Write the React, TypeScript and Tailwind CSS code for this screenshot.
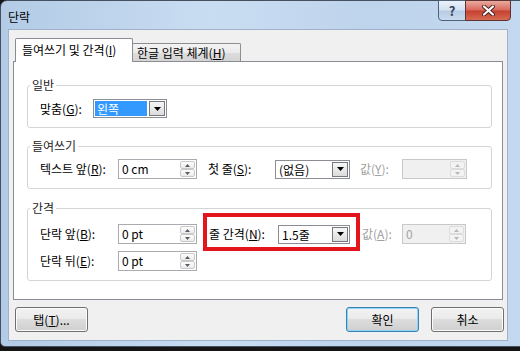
import React from "react";

const font = "font-['Noto_Sans_CJK_KR','Noto_Sans',sans-serif]";

const K = ({ k }: { k: string }) => <u className="underline-offset-[1px]">{k}</u>;

const Arrow = ({ up, dim }: { up?: boolean; dim?: boolean }) => (
  <svg width="5" height="3" viewBox="0 0 5 3">
    <path d={up ? "M2.5 0L5 3H0z" : "M0 0h5L2.5 3z"} fill={dim ? "#b8b8b8" : "#555c66"} />
  </svg>
);

const Spin = ({ value, w, disabled }: { value: string; w: string; disabled?: boolean }) => (
  <div
    className={`flex h-[20px] ${w} border ${
      disabled ? "border-[#c8c8c8] bg-[#f0f0f0] text-[#a3a3a3]" : "border-[#a9abb0] bg-white text-black"
    }`}
  >
    <div className="flex-1 pl-[3px] leading-[18px]">{value}</div>
    <div className="flex w-[17px] flex-col p-px">
      <div
        className={`flex h-[9px] items-center justify-center rounded-[2px] border ${
          disabled ? "border-[#dcdcdc] bg-[#f3f3f3]" : "border-[#c9c9c9] bg-[linear-gradient(#fdfdfd,#ebebeb)]"
        }`}
      >
        <Arrow up dim={disabled} />
      </div>
      <div
        className={`flex h-[9px] items-center justify-center rounded-[2px] border ${
          disabled ? "border-[#dcdcdc] bg-[#f3f3f3]" : "border-[#c9c9c9] bg-[linear-gradient(#fdfdfd,#ebebeb)]"
        }`}
      >
        <Arrow dim={disabled} />
      </div>
    </div>
  </div>
);

const Combo = ({ value, w, selected }: { value: string; w: string; selected?: boolean }) => (
  <div className={`flex h-[19px] ${w} border border-[#8a8d93] bg-white p-px`}>
    <div className={`flex-1 pl-[2px] leading-[15px] ${selected ? "bg-[#3399ff] text-white" : "text-black"}`}>
      {value}
    </div>
    <div className="ml-[2px] flex w-[16px] items-center justify-center border border-[#75787e] bg-[linear-gradient(#f6f6f6,#dcdcdc)]">
      <svg width="7" height="4" viewBox="0 0 7 4">
        <path d="M0 0h7L3.5 4z" fill="#000" />
      </svg>
    </div>
  </div>
);

const Group = ({ title, children, className }: { title: string; children: React.ReactNode; className: string }) => (
  <fieldset className={`ml-[13px] w-[465px] rounded-[3px] border border-[#d5d5d5] ${className}`}>
    <legend className="ml-[2px] px-[2px] leading-[14px] text-[#1e1e1e]">{title}</legend>
    {children}
  </fieldset>
);

const Button = ({ children, isDefault }: { children: React.ReactNode; isDefault?: boolean }) => (
  <button
    className={`h-[25px] w-[73px] rounded-[3px] border bg-[linear-gradient(#f2f2f2_0%,#ebebeb_45%,#dddddd_50%,#cfcfcf_100%)] leading-[23px] text-black ${
      isDefault
        ? "border-[#3c7fb1] shadow-[inset_0_0_0_1px_#8ad6f6]"
        : "border-[#707070] shadow-[inset_0_0_0_1px_#fbfbfb]"
    }`}
  >
    {children}
  </button>
);

export default function App() {
  return (
    <div className={`h-[351px] w-[520px] overflow-hidden bg-[#151515] text-[12px] ${font}`}>
      <div className="h-[347px] w-[530px] rounded-t-[7px] rounded-b-[5px] border border-[#46515f] bg-[linear-gradient(90deg,#b3cbe6,#c9ddf2_40%,#bed4ec_70%,#c4d9ef)] pl-[7px]">
        {/* title bar */}
        <div className="flex h-[28px] w-[503px]">
          <div className="pt-[8px] leading-[16px] text-black">단락</div>
          <div className="-mt-px ml-auto flex h-[21px]">
            <div className="flex w-[28px] items-center justify-center rounded-bl-[4px] border border-[#50617a] bg-[linear-gradient(#eaf1f9,#d3e1f1_48%,#b7cbe4_52%,#c9daee)] text-[13px] font-bold leading-none text-[#34465e]">
              ?
            </div>
            <div className="-ml-px flex w-[46px] items-center justify-center rounded-br-[4px] border border-[#5c3434] bg-[linear-gradient(#e9aa9e,#d9695c_48%,#c5402f_52%,#d76a52)]">
              <svg width="13" height="11" viewBox="0 0 13 11">
                <path d="M2 1.5l9 8M11 1.5l-9 8" stroke="#4a2020" strokeWidth="4" strokeLinecap="round" />
                <path d="M2 1.5l9 8M11 1.5l-9 8" stroke="#fff" strokeWidth="2.2" strokeLinecap="round" />
              </svg>
            </div>
          </div>
        </div>

        {/* client area */}
        <div className="flex h-[312px] w-[500px] flex-col border border-[#9fb2c9] bg-[#f0f0f0] pl-[4px] pt-[8px]">
          {/* tabs */}
          <div className="flex h-[23px] items-end pl-[2px]">
            <div className="relative z-10 -mb-px h-[24px] w-[118px] rounded-t-[2px] border border-b-0 border-[#898c95] bg-white pl-[6px] leading-[22px] text-black">
              들여쓰기 및 간격(<K k="I" />)
            </div>
            <div className="h-[18px] w-[108px] rounded-tr-[2px] border border-b-0 border-l-0 border-[#8c8e94] bg-[linear-gradient(#f3f3f3,#ebebeb_50%,#dddddd_51%,#d4d4d4)] pl-[4px] leading-[17px] text-black">
              한글 입력 체계(<K k="H" />)
            </div>
          </div>

          {/* panel */}
          <div className="relative h-[239px] w-[490px] border border-[#898c95] bg-white text-black">
            <Group title="일반" className="mt-[16px] h-[50px]">
              <div className="flex items-center pl-[12px] pt-[7px]">
                <span className="w-[53px]">
                  맞춤(<K k="G" />):
                </span>
                <Combo value="왼쪽" w="w-[74px]" selected />
              </div>
            </Group>

            <Group title="들여쓰기" className="mt-[11px] h-[50px]">
              <div className="flex h-[26px] items-center pl-[12px] pt-[6px]">
                <span className="w-[78px]">
                  텍스트 앞(<K k="R" />):
                </span>
                <Spin value="0 cm" w="w-[79px]" />
                <span className="ml-[11px] w-[67px]">
                  첫 줄(<K k="S" />):
                </span>
                <Combo value="(없음)" w="w-[75px]" />
                <span className="ml-[10px] w-[42px] text-[#a0a0a0]">
                  값(<K k="Y" />):
                </span>
                <Spin value="" w="w-[65px]" disabled />
              </div>
            </Group>

            <Group title="간격" className="mt-[12px] h-[80px]">
              <div className="flex flex-col gap-[7px] pl-[12px] pt-[9px]">
                <div className="flex h-[20px] items-center">
                  <span className="w-[78px]">
                    단락 앞(<K k="B" />):
                  </span>
                  <Spin value="0 pt" w="w-[79px]" />
                  <span className="ml-[12px] w-[69px]">
                    줄 간격(<K k="N" />):
                  </span>
                  <Combo value="1.5줄" w="w-[72px]" />
                  <span className="ml-[12px] w-[40px] text-[#a0a0a0]">
                    값(<K k="A" />):
                  </span>
                  <Spin value="0" w="w-[64px]" disabled />
                </div>
                <div className="flex h-[20px] items-center">
                  <span className="w-[78px]">
                    단락 뒤(<K k="E" />):
                  </span>
                  <Spin value="0 pt" w="w-[79px]" />
                </div>
              </div>
            </Group>

            {/* red highlight annotation */}
            <div className="pointer-events-none absolute left-[189px] top-[151px] h-[38px] w-[157px] border-[4px] border-[#e3141c]" />
          </div>

          {/* buttons */}
          <div className="mt-[7px] flex w-[491px] items-center pl-[2px]">
            <Button>
              탭(<K k="T" />)...
            </Button>
            <div className="ml-auto flex gap-[12px]">
              <Button isDefault>확인</Button>
              <Button>취소</Button>
            </div>
          </div>
        </div>
      </div>
    </div>
  );
}
